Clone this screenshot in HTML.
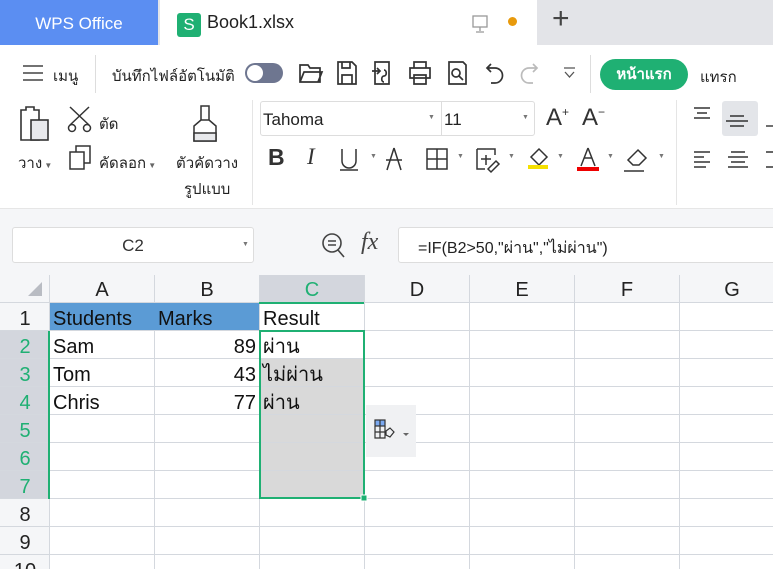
<!DOCTYPE html>
<html><head><meta charset="utf-8"><style>
*{margin:0;padding:0;box-sizing:border-box}
body{width:773px;height:569px;overflow:hidden;background:#fff;font-family:"Liberation Sans","Noto Sans CJK SC",sans-serif;position:relative;color:#222}
.a{position:absolute}
svg{position:absolute}
</style></head><body>
<div class="a" style="left:0;top:0;width:773px;height:45px;background:#e3e4e8"></div>
<div class="a" style="left:0;top:0;width:158px;height:45px;background:#5b8ef2;color:#fff;font-size:17px;line-height:48px;text-align:center">WPS Office</div>
<div class="a" style="left:160px;top:0;width:377px;height:45px;background:#fff"></div>
<div class="a" style="left:177px;top:13px;width:24px;height:24px;background:#1fb073;border-radius:3px;color:#fff;font-size:17px;text-align:center;line-height:24px">S</div>
<div class="a" style="left:207px;top:12px;font-size:18px">Book1.xlsx</div>
<svg style="left:471px;top:14px" width="18" height="20"><rect x="2" y="2" width="14" height="11" fill="none" stroke="#999" stroke-width="1.3"/><path d="M9 13v4M5 18h8" stroke="#999" stroke-width="1.3"/></svg>
<div class="a" style="left:508px;top:17px;width:9px;height:9px;border-radius:50%;background:#e89a0c"></div>
<div class="a" style="left:552px;top:2px;font-size:30px;color:#444">+</div>
<svg style="left:22px;top:64px" width="22" height="18"><path d="M1 2h20M1 9h20M1 16h20" stroke="#444" stroke-width="1.6"/></svg>
<div class="a" style="left:53px;top:64px;font-size:15px">เมนู</div>
<div class="a" style="left:95px;top:55px;width:1px;height:38px;background:#ddd"></div>
<div class="a" style="left:112px;top:64px;font-size:15px">บันทึกไฟล์อัตโนมัติ</div>
<div class="a" style="left:245px;top:63px;width:38px;height:20px;border-radius:10px;background:#6e7690"></div>
<div class="a" style="left:247px;top:65px;width:16px;height:16px;border-radius:50%;background:#fff"></div>
<svg style="left:298px;top:58px" width="280" height="30" fill="none" stroke="#333" stroke-width="1.7">
<path d="M2 7h8l2 3h10v14H2z M2 24l4-10h18l-4 10"/>
<path d="M40 4h14l4 4v18H40z M44 4v6h8V4 M44 26v-9h10v9"/>
<path d="M77 4h14v22H77z M74 13h8 M79 10l3 3-3 3 M86 12c3 0 3 6 0 6s-3 6 0 6"/>
<path d="M112 10h20v10h-20z M116 10V4h12v6 M116 17h12v9h-12z"/>
<path d="M151 4h14l3 3v19h-17z M158 11a4 4 0 1 1 0 8a4 4 0 1 1 0-8 M161 18l4 4"/>
<path d="M193 6l-4 4 4 4 M189 10h8a7 7 0 0 1 0 15h-4"/>
</svg>
<svg style="left:520px;top:58px" width="30" height="30" fill="none" stroke="#bbb" stroke-width="1.7"><path d="M13 6l4 4-4 4 M17 10H9a7 7 0 0 0 0 15h4"/></svg>
<svg style="left:562px;top:66px" width="16" height="14" fill="none" stroke="#555" stroke-width="1.3"><path d="M2 2h11 M3 6l4.5 5 4.5-5"/></svg>
<div class="a" style="left:590px;top:55px;width:1px;height:38px;background:#ddd"></div>
<div class="a" style="left:600px;top:59px;width:88px;height:31px;border-radius:16px;background:#1fb073;color:#fff;font-weight:bold;font-size:15px;text-align:center;line-height:31px">หน้าแรก</div>
<div class="a" style="left:700px;top:65px;font-size:15px">แทรก</div>
<svg style="left:18px;top:104px" width="40" height="40" fill="none" stroke="#333" stroke-width="1.6"><path d="M3 6h5v-3h8v3h5v30H3z"/><rect x="13" y="16" width="17" height="20" fill="#e8e9ec"/></svg>
<svg style="left:67px;top:105px" width="30" height="28" fill="none" stroke="#333" stroke-width="1.5"><path d="M3 2l19 18 M22 2L3 20"/><circle cx="5" cy="23" r="3.5"/><circle cx="20" cy="23" r="3.5"/></svg>
<div class="a" style="left:99px;top:112px;font-size:15px">ตัด</div>
<div class="a" style="left:18px;top:151px;font-size:15px">วาง<span style="font-size:8px;color:#666"> ▼</span></div>
<svg style="left:68px;top:144px" width="26" height="28" fill="none" stroke="#333" stroke-width="1.5"><rect x="2" y="8" width="14" height="17"/><path d="M8 8V2h14v17h-6"/></svg>
<div class="a" style="left:99px;top:151px;font-size:15px">คัดลอก<span style="font-size:8px;color:#666"> ▼</span></div>
<svg style="left:190px;top:104px" width="34" height="40" fill="none" stroke="#333" stroke-width="1.5"><path d="M11 2h8v14h-8z M11 16l-7 6v15h22V22l-7-6"/><rect x="4" y="29" width="22" height="8" fill="#e8e9ec"/></svg>
<div class="a" style="left:176px;top:151px;font-size:15px">ตัวคัดวาง</div>
<div class="a" style="left:184px;top:177px;font-size:15px">รูปแบบ</div>
<div class="a" style="left:252px;top:100px;width:1px;height:105px;background:#e5e5e5"></div>
<div class="a" style="left:260px;top:101px;width:275px;height:35px;border:1px solid #ddd;border-radius:3px"></div>
<div class="a" style="left:441px;top:101px;width:1px;height:35px;background:#ddd"></div>
<div class="a" style="left:263px;top:110px;font-size:17px">Tahoma</div>
<div class="a" style="left:428px;top:114px;font-size:7px;color:#777">▼</div>
<div class="a" style="left:444px;top:110px;font-size:17px">11</div>
<div class="a" style="left:522px;top:114px;font-size:7px;color:#777">▼</div>
<div class="a" style="left:546px;top:104px;font-size:24px;color:#333">A<sup style="font-size:12px">+</sup></div>
<div class="a" style="left:582px;top:104px;font-size:24px;color:#333">A<sup style="font-size:12px">−</sup></div>
<div class="a" style="left:268px;top:144px;font-size:23px;font-weight:bold;color:#333">B</div>
<div class="a" style="left:307px;top:144px;font-size:23px;font-style:italic;color:#333;font-family:'Liberation Serif',serif">I</div>
<svg style="left:338px;top:145px" width="310" height="30" fill="none" stroke="#333" stroke-width="1.5">
<path d="M4 4v12a7 7 0 0 0 14 0V4 M2 25h18"/>
<path d="M56 3l-7 22 M56 3l7 22 M48 15h16"/>
<rect x="89" y="4" width="20" height="20"/><path d="M99 4v20 M89 14h20"/>
<path d="M139 4h18v6 M139 4v20h8 M148 10v10 M143 14h10 M150 24l8-8 3 3-8 8z"/>
<path d="M201 4l-8 8 8 8 8-8z" /><rect x="190" y="20" width="20" height="4" fill="#f5e000" stroke="none"/>
<path d="M250 3l-7 18 M250 3l7 18 M246 13h8"/><rect x="239" y="22" width="22" height="4" fill="#e00" stroke="none"/>
<path d="M300 5l8 8-7 7h-6l-5-5z M286 26h20"/>
</svg>
<div class="a" style="left:370px;top:153px;font-size:7px;color:#777">▼</div>
<div class="a" style="left:457px;top:153px;font-size:7px;color:#777">▼</div>
<div class="a" style="left:508px;top:153px;font-size:7px;color:#777">▼</div>
<div class="a" style="left:557px;top:153px;font-size:7px;color:#777">▼</div>
<div class="a" style="left:607px;top:153px;font-size:7px;color:#777">▼</div>
<div class="a" style="left:658px;top:153px;font-size:7px;color:#777">▼</div>
<div class="a" style="left:676px;top:100px;width:1px;height:105px;background:#e5e5e5"></div>
<div class="a" style="left:722px;top:101px;width:36px;height:35px;background:#e3e5e9;border-radius:3px"></div>
<svg style="left:690px;top:104px" width="83" height="70" fill="none" stroke="#333" stroke-width="1.4">
<path d="M4 4h16 M7 9h10 M4 14h16"/>
<path d="M40 12h14 M36 17h22 M40 22h14"/>
<path d="M76 22h7"/>
<path d="M4 48h16 M4 53h10 M4 58h16 M4 63h12"/>
<path d="M41 48h14 M38 53h20 M41 58h14 M38 63h20"/>
<path d="M76 48h7 M76 63h7"/>
</svg>
<div class="a" style="left:0;top:208px;width:773px;height:95px;background:#f5f6f8;border-top:1px solid #e6e6e6"></div>
<div class="a" style="left:12px;top:227px;width:242px;height:36px;background:#fff;border:1px solid #ddd;border-radius:3px;font-size:17px;text-align:center;line-height:36px;color:#333">C2</div>
<div class="a" style="left:242px;top:241px;font-size:7px;color:#777">▼</div>
<svg style="left:320px;top:232px" width="28" height="28" fill="none" stroke="#444" stroke-width="1.6"><circle cx="12" cy="11" r="9"/><path d="M18 18l6 7 M8 9h8 M8 13h8"/></svg>
<div class="a" style="left:361px;top:229px;font-size:24px;font-style:italic;color:#444;font-family:'Liberation Serif',serif">fx</div>
<div class="a" style="left:398px;top:227px;width:380px;height:36px;background:#fff;border:1px solid #ddd;border-radius:3px"></div>
<div class="a" style="left:418px;top:236px;font-size:16px;color:#222">=IF(B2&gt;50,"ผ่าน","ไม่ผ่าน")</div>
<svg style="left:0;top:275px" width="773" height="294">
<rect x="0" y="0" width="773" height="28" fill="#f5f6f8"/>
<rect x="259" y="0" width="105" height="28" fill="#d3d6dd"/>
<rect x="0" y="28" width="49" height="266" fill="#f5f6f8"/>
<rect x="0" y="56" width="49" height="168" fill="#d3d6dd"/>
<path d="M42 7v14h-14z" fill="#b9bcc3"/>
<rect x="259" y="84" width="105" height="140" fill="#d9d9d9"/>
<g stroke="#d4d8de" stroke-width="1">
<path d="M49.5 0v294 M154.5 0v294 M259.5 0v294 M364.5 0v294 M469.5 0v294 M574.5 0v294 M679.5 0v294"/>
<path d="M0 27.5h773 M0 55.5h773 M0 83.5h773 M0 111.5h773 M0 139.5h773 M0 167.5h773 M0 195.5h773 M0 223.5h773 M0 251.5h773 M0 279.5h773"/>
</g>
<rect x="50" y="28" width="209" height="27" fill="#5b9bd5"/>
<rect x="259" y="27" width="105" height="2" fill="#1fb073"/>
<rect x="48" y="56" width="2" height="168" fill="#1fb073"/>
<rect x="260" y="56" width="104" height="167" fill="none" stroke="#1fb073" stroke-width="2"/>
<rect x="361" y="220" width="6" height="6" fill="#1fb073" stroke="#fff" stroke-width="1"/>
<rect x="366" y="130" width="50" height="52" fill="#f0f1f3"/>
<g fill="none" stroke="#333" stroke-width="1.2"><rect x="375" y="145" width="10" height="6" fill="#7aa8f0"/><path d="M375 151v12h10v-12 M375 157h10 M380 145v18 M386 156l4-3 4 4-4 5-4-2z"/></g>
<path d="M403 158l3 3 3-3z" fill="#666"/>
<g font-family="Liberation Sans" font-size="20" fill="#222" text-anchor="middle">
<text x="102" y="21">A</text><text x="207" y="21">B</text><text x="312" y="21" fill="#1fb073">C</text><text x="417" y="21">D</text><text x="522" y="21">E</text><text x="627" y="21">F</text><text x="732" y="21">G</text>
<text x="25" y="50">1</text>
<text x="25" y="78" fill="#1fb073">2</text><text x="25" y="106" fill="#1fb073">3</text><text x="25" y="134" fill="#1fb073">4</text><text x="25" y="162" fill="#1fb073">5</text><text x="25" y="190" fill="#1fb073">6</text><text x="25" y="218" fill="#1fb073">7</text>
<text x="25" y="246">8</text><text x="25" y="274">9</text><text x="25" y="302">10</text>
</g>
<g font-family="Liberation Sans,Noto Sans CJK SC,sans-serif" font-size="20" fill="#111">
<text x="53" y="50">Students</text><text x="158" y="50">Marks</text><text x="263" y="50">Result</text>
<text x="53" y="78">Sam</text><text x="53" y="106">Tom</text><text x="53" y="134">Chris</text>
<text x="256" y="78" text-anchor="end">89</text><text x="256" y="106" text-anchor="end">43</text><text x="256" y="134" text-anchor="end">77</text>
<text x="263" y="78">ผ่าน</text><text x="263" y="106">ไม่ผ่าน</text><text x="263" y="134">ผ่าน</text>
</g>
</svg>
</body></html>
